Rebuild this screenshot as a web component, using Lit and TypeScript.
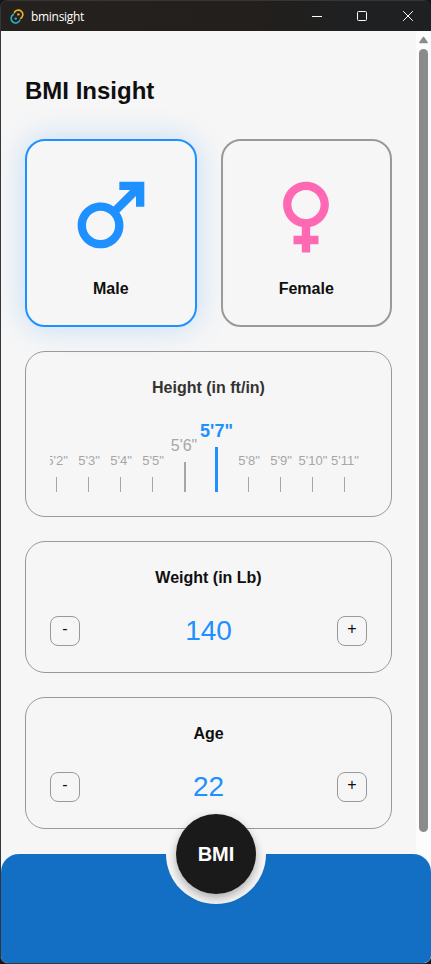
import { LitElement, html, svg, css } from "lit";
import { customElement, property, state } from "lit/decorators.js";
import { classMap } from "lit/directives/class-map.js";

const MALE =
  "M9.5 11c1.93 0 3.5 1.57 3.5 3.5S11.43 18 9.5 18 6 16.43 6 14.5 7.57 11 9.5 11zm0-2C6.46 9 4 11.46 4 14.5S6.46 20 9.5 20s5.5-2.46 5.5-5.5c0-1.16-.36-2.23-.97-3.12L18 7.42V10h2V4h-6v2h2.58l-3.97 3.97C11.73 9.36 10.66 9 9.5 9z";
const FEMALE =
  "M17.5 9.5C17.5 6.46 15.04 4 12 4S6.5 6.46 6.5 9.5c0 2.7 1.94 4.93 4.5 5.4V17H9v2h2v2h2v-2h2v-2h-2v-2.1c2.56-.47 4.5-2.7 4.5-5.4zm-9 0C8.5 7.57 10.07 6 12 6s3.5 1.57 3.5 3.5S13.93 13 12 13s-3.5-1.57-3.5-3.5z";

@customElement("title-bar")
class TitleBar extends LitElement {
  static styles = css`
    :host {
      display: flex;
      align-items: center;
      height: 30px;
      padding-left: 9px;
      color: #fff;
      background: linear-gradient(90deg, #25211e, #221f1c 60%, #1f2021 80%);
      font: 12px/16px "Open Sans", "Noto Sans", sans-serif;
    }
    .logo { width: 14px; height: 15px; margin-right: 7px; }
    .name { flex: 1; padding-top: 1px; letter-spacing: -0.3px; }
    .controls { display: flex; }
    .control { display: flex; width: 46px; justify-content: center; }
    .control:first-child { width: 44px; }
    .control svg { width: 12px; height: 12px; }
  `;
  render() {
    return html`
      <svg class="logo" viewBox="0 0 14 15" fill="none" stroke-width="1.6">
        <path d="M4 4.4A4.5 4.5 0 1 1 10.2 9.7" stroke="#e9b02e" />
        <path d="M10 10.6A4.5 4.5 0 1 1 3.9 5.3" stroke="#24b8cc" />
        <circle cx="8.4" cy="5.4" r="1.2" fill="#e9b02e" />
        <circle cx="5.7" cy="9.6" r="1.2" fill="#24b8cc" />
      </svg>
      <span class="name">bminsight</span>
      <div class="controls">
        ${[
          svg`<path d="M1 6.5H11" />`,
          svg`<rect x="1.5" y="1.5" width="9" height="9" rx="1" />`,
          svg`<path d="M1.2 1.2L10.8 10.8M10.8 1.2L1.2 10.8" />`,
        ].map(
          (g) => html`<span class="control"
            ><svg viewBox="0 0 12 12" fill="none" stroke="#fff" stroke-width="1">${g}</svg></span
          >`
        )}
      </div>
    `;
  }
}

@customElement("gender-card")
class GenderCard extends LitElement {
  static styles = css`
    :host { display: block; flex: 1; }
    .card {
      box-sizing: border-box;
      height: 188px;
      padding: 24px;
      border: 2px solid #999;
      border-radius: 20px;
      display: flex;
      flex-direction: column;
      align-items: center;
      color: #ff69b4;
    }
    .card.selected {
      border-color: #1e90ff;
      color: #1e90ff;
      box-shadow: 0 0 30px rgba(30, 144, 255, 0.24);
    }
    svg { width: 100px; height: 100px; flex: none; }
    .label { margin-top: 15px; font-weight: bold; font-size: 16px; line-height: 18px; color: #0f0f0f; }
  `;
  @property() label = "";
  @property() path = "";
  @property({ type: Boolean }) selected = false;
  render() {
    return html`<div class=${classMap({ card: true, selected: this.selected })}>
      <svg viewBox="0 0 24 24" fill="currentColor"><path d=${this.path} /></svg>
      <span class="label">${this.label}</span>
    </div>`;
  }
}

@customElement("height-ruler")
class HeightRuler extends LitElement {
  static styles = css`
    :host { display: block; overflow: hidden; }
    .ruler { display: flex; align-items: flex-end; height: 73px; margin-left: -10px; }
    .mark {
      flex: none;
      width: 32px;
      display: flex;
      flex-direction: column;
      align-items: center;
      color: #a6a6a6;
      font-size: 13px;
      line-height: 15px;
      white-space: nowrap;
    }
    .label { display: flex; justify-content: center; width: 0; margin-left: 2px; }
    .line { width: 1px; height: 15px; margin-top: 9px; background: #a6a6a6; }
    .near { font-size: 16px; line-height: 18px; }
    .near .label { margin-left: 0; }
    .near .line { width: 2px; height: 30px; margin-top: 7px; margin-left: 2px; }
    .selected { font-size: 18px; line-height: 20px; font-weight: bold; color: #1e90ff; }
    .selected .label { margin-left: 1px; }
    .selected .line { width: 3px; height: 45px; margin-top: 6px; background: #1e90ff; }
  `;
  @property({ type: Number }) value = 7;
  render() {
    return html`<div class="ruler">
      ${[2, 3, 4, 5, 6, 7, 8, 9, 10, 11].map(
        (n) => html`<div
          class=${classMap({ mark: true, near: n === this.value - 1, selected: n === this.value })}
        >
          <span class="label">5'${n}"</span><span class="line"></span>
        </div>`
      )}
    </div>`;
  }
}

@customElement("number-stepper")
class NumberStepper extends LitElement {
  static styles = css`
    :host { display: flex; align-items: center; justify-content: space-between; height: 32px; }
    .button {
      box-sizing: border-box;
      width: 30px;
      height: 30px;
      padding: 0 0 4px;
      border: 1px solid #999;
      border-radius: 8px;
      background: transparent;
      color: #0f0f0f;
      font: 16px/18px "Liberation Sans", Arial, sans-serif;
    }
    .value { color: #1e90ff; font-size: 28px; line-height: 32px; }
  `;
  @property({ type: Number }) value = 0;
  render() {
    return html`
      <button class="button" @click=${() => this.value--}>-</button>
      <span class="value">${this.value}</span>
      <button class="button" @click=${() => this.value++}>+</button>
    `;
  }
}

@customElement("app-root")
class AppRoot extends LitElement {
  static styles = css`
    :host {
      display: block;
      height: 964px;
      background: #15161a;
      font-family: "Liberation Sans", Arial, sans-serif;
      color: #0f0f0f;
    }
    .window {
      box-sizing: border-box;
      height: 964px;
      border: 1px solid #35353a;
      border-right: 0;
      border-radius: 8px;
      overflow: hidden;
      display: flex;
      flex-direction: column;
      position: relative;
    }
    .body { flex: 1; display: flex; background: #f6f6f6; }
    .content { flex: 1; display: flex; flex-direction: column; padding: 46px 24px 0; }
    .heading { margin: 0 0 34px; font-size: 24px; line-height: 28px; }
    .genders { display: flex; gap: 24px; margin-bottom: 24px; }
    .panel {
      box-sizing: border-box;
      height: 132px;
      padding: 24px;
      margin-bottom: 24px;
      border: 1px solid #999;
      border-radius: 20px;
    }
    .panel.tall { height: 166px; }
    .title { margin: 3px 0 28px; font-size: 16px; line-height: 18px; text-align: center; }
    .tall .title { margin-bottom: 22px; color: #333; }
    .scrollbar {
      width: 15px;
      background: #fcfcfc;
      display: flex;
      flex-direction: column;
      align-items: center;
    }
    .arrow { width: 9px; height: 8px; margin: 5px 0; }
    .thumb { width: 9px; height: 783px; border-radius: 5px; background: #8b8b8b; }
    .footer {
      position: absolute;
      left: 0;
      right: 0;
      bottom: 0;
      height: 109px;
      border-radius: 18px 18px 0 0;
      background: #136fc3;
      display: flex;
      justify-content: center;
    }
    .notch { width: 100px; height: 50px; border-radius: 0 0 50px 50px; background: #f6f6f6; }
    .bmi {
      display: block;
      width: 80px;
      height: 80px;
      margin: -40px auto 0;
      padding: 0;
      border: 0;
      border-radius: 50%;
      background: #1a1a1a;
      color: #fff;
      box-shadow: 0 4px 10px rgba(0, 0, 0, 0.3);
      font: bold 20px/24px "Liberation Sans", Arial, sans-serif;
    }
  `;
  @state() private gender = "Male";
  render() {
    return html`<div class="window">
      <title-bar></title-bar>
      <div class="body">
        <main class="content">
          <h1 class="heading">BMI Insight</h1>
          <div class="genders">
            ${[
              ["Male", MALE],
              ["Female", FEMALE],
            ].map(
              ([label, path]) => html`<gender-card
                .label=${label}
                .path=${path}
                .selected=${this.gender === label}
                @click=${() => (this.gender = label)}
              ></gender-card>`
            )}
          </div>
          <section class="panel tall">
            <h2 class="title">Height (in ft/in)</h2>
            <height-ruler></height-ruler>
          </section>
          <section class="panel">
            <h2 class="title">Weight (in Lb)</h2>
            <number-stepper .value=${140}></number-stepper>
          </section>
          <section class="panel">
            <h2 class="title">Age</h2>
            <number-stepper .value=${22}></number-stepper>
          </section>
        </main>
        <div class="scrollbar">
          <svg class="arrow" viewBox="0 0 9 8"><path d="M4.5 1.5L8 6.5H1z" fill="#8b8b8b" stroke="#8b8b8b" stroke-width="1.6" stroke-linejoin="round" /></svg>
          <div class="thumb"></div>
        </div>
      </div>
      <div class="footer">
        <div class="notch"><button class="bmi">BMI</button></div>
      </div>
    </div>`;
  }
}
